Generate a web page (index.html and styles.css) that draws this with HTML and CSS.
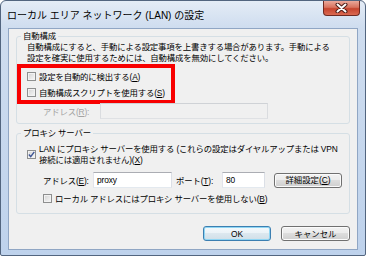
FILE: index.html
```html
<!DOCTYPE html>
<html lang="ja">
<head>
<meta charset="utf-8">
<title>LAN の設定</title>
<link rel="stylesheet" href="styles.css">
</head>
<body>
<div class="window">
  <div class="titlebar">
    <span class="title">ローカル エリア ネットワーク (LAN) の設定</span>
    <div class="close">
      <svg width="13" height="10" viewBox="0 0 13 10">
        <path d="M2.5 1.5 L10.5 8.5 M10.5 1.5 L2.5 8.5" stroke="#4a1c16" stroke-width="4" stroke-linecap="round"/>
        <path d="M2.5 1.5 L10.5 8.5 M10.5 1.5 L2.5 8.5" stroke="#ffffff" stroke-width="2" stroke-linecap="round"/>
      </svg>
    </div>
  </div>
  <div class="client">
    <fieldset class="group g1">
      <legend>自動構成</legend>
      <p class="desc">自動構成にすると、手動による設定事項を上書きする場合があります。手動による<br>設定を確実に使用するためには、自動構成を無効にしてください。</p>
      <div class="highlight">
        <div class="check"><span class="box"></span><span>設定を自動的に検出する(<u>A</u>)</span></div>
        <div class="check"><span class="box"></span><span>自動構成スクリプトを使用する(<u>S</u>)</span></div>
      </div>
      <div class="row indent">
        <span class="lbl lbl-r disabled">アドレス(<u>R</u>):</span>
        <span class="input input-r dis"></span>
      </div>
    </fieldset>
    <fieldset class="group g2">
      <legend>プロキシ サーバー</legend>
      <div class="check multi">
        <span class="box checked">
          <svg width="7" height="7" viewBox="0 0 7 7"><path d="M0.8 3.6 L2.7 5.6 L6.3 0.9" fill="none" stroke="#3d5494" stroke-width="1.4"/></svg>
        </span>
        <span>LAN にプロキシ サーバーを使用する (これらの設定はダイヤルアップまたは VPN<br>接続には適用されません)(<u>X</u>)</span>
      </div>
      <div class="row indent row2">
        <span class="lbl lbl-e">アドレス(<u>E</u>):</span>
        <span class="input input-e">proxy</span>
        <span class="lbl lbl-t">ポート(<u>T</u>):</span>
        <span class="input input-t">80</span>
        <button class="btn btn-adv">詳細設定(<u>C</u>)</button>
      </div>
      <div class="check indent small">
        <span class="box"></span><span>ローカル アドレスにはプロキシ サーバーを使用しない(<u>B</u>)</span>
      </div>
    </fieldset>
    <div class="buttons">
      <button class="btn btn-ok">OK</button>
      <button class="btn btn-cancel">キャンセル</button>
    </div>
  </div>
</div>
</body>
</html>
```
FILE: styles.css
```css
* { box-sizing: border-box; }
html, body { margin: 0; padding: 0; background: #ffffff; }
body {
  font-family: "Liberation Sans", "Noto Sans CJK JP", sans-serif;
  font-size: 8.4px;
  letter-spacing: -0.15px;
  color: #000000;
}
u { text-decoration: underline; text-underline-offset: 1px; }

.window {
  width: 366px;
  height: 256px;
  border: 1px solid #52657f;
  border-radius: 6px 6px 2px 2px;
  background: linear-gradient(#e4ecf6, #cfddef 26px, #bed2ec);
  display: flex;
  flex-direction: column;
  padding: 0 7px 5px 7px;
}
.titlebar {
  height: 27px;
  display: flex;
  align-items: flex-start;
  flex: none;
}
.title {
  font-size: 10px;
  letter-spacing: 0;
  line-height: 12px;
  margin-top: 9px;
  margin-left: -1px;
  color: #000;
}
.close {
  margin-left: auto;
  margin-right: -2px;
  width: 37px;
  height: 15px;
  border: 1px solid #6e2a22;
  border-top: none;
  border-radius: 0 0 4px 4px;
  background: linear-gradient(#eaa89b, #d8735f 45%, #c6442e 55%, #da6a52);
  display: flex;
  align-items: center;
  justify-content: center;
}
.close svg { display: block; }

.client {
  flex: 1;
  background: #f0f0f0;
  border: 1px solid #90a6c4;
  padding: 2px 7px 0 7px;
  display: flex;
  flex-direction: column;
}

.group {
  margin: 0;
  border: 1px solid #d5dfe5;
  border-radius: 3px;
  padding: 1px 6px 4px 10px;
  min-width: 0;
}
.group legend {
  padding: 0 2px;
  margin-left: -6px;
  line-height: 10px;
}
.g2 { margin-top: 4px; padding-bottom: 9px; }

.desc { margin: 0; line-height: 11px; white-space: nowrap; }

.highlight {
  border: 4px solid #f80000;
  margin: 0 0 -1px -10px;
  width: 158px;
  padding-left: 6px;
}

.check {
  display: flex;
  align-items: center;
  height: 16px;
  gap: 3px;
  white-space: nowrap;
}
.box {
  width: 9px;
  height: 9px;
  flex: none;
  border: 1px solid #8e8f8f;
  background: linear-gradient(135deg, #d3d3d3, #f8f8f8);
  box-shadow: inset 0 0 0 1px #f2f2f2;
  display: flex;
  align-items: center;
  justify-content: center;
}
.box.checked svg { display: block; }

.check.multi {
  height: auto;
  line-height: 10.5px;
  margin-top: 5px;
}
.check.small { height: 12px; margin-top: 4px; }

.row {
  display: flex;
  align-items: center;
  height: 16px;
  white-space: nowrap;
}
.indent { padding-left: 16px; }
.row2 { margin-top: 7px; }

.disabled { color: #a3a3a3; }
.lbl-r { width: 57px; }
.lbl-e { width: 50px; }
.lbl-t { width: 46px; margin-left: 4px; }

.input {
  height: 16px;
  border: 1px solid;
  border-color: #abadb3 #dbdfe6 #e3e9ef #e2e3ea;
  background: #ffffff;
  padding-left: 3px;
  line-height: 14px;
}
.input.dis {
  background: #f0f0f0;
  border-color: #cfd2d6 #dadcdf #dfe1e4 #dadcdf;
}
.input-r { width: 168px; }
.input-e { width: 79px; }
.input-t { width: 43px; }

.btn {
  font: inherit;
  height: 15px;
  padding: 0;
  color: #000;
  border: 1px solid #707070;
  border-radius: 3px;
  background: linear-gradient(#f2f2f2, #ebebeb 50%, #dddddd 50%, #cfcfcf);
  box-shadow: inset 0 0 0 1px #fbfbfb;
  line-height: 12px;
}
.btn-adv { width: 68px; margin-left: 9px; }

.buttons {
  display: flex;
  justify-content: flex-end;
  gap: 10px;
  margin-top: 12px;
}
.btn-ok {
  width: 68px;
  border-color: #3c7fb1;
  box-shadow: inset 0 0 0 1px #8fd6f4;
  background: linear-gradient(#f4f9fc, #eaf2f7 50%, #dce8ef 50%, #d0dfe8);
}
.btn-cancel { width: 69px; }
```
